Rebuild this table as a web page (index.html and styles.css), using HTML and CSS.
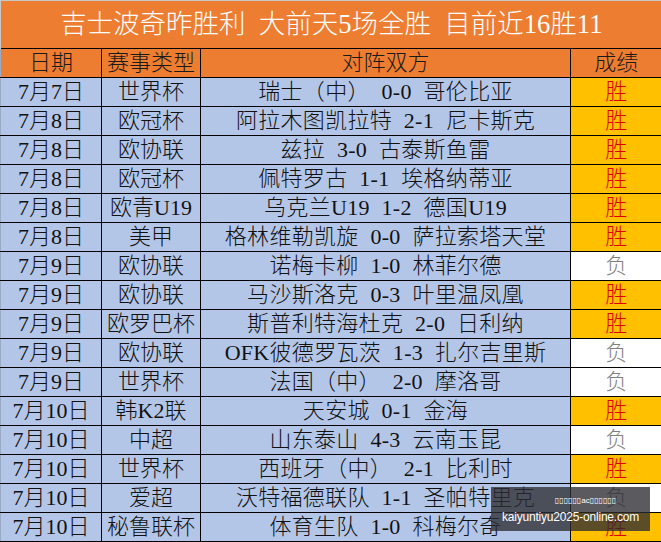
FILE: index.html
```html
<!DOCTYPE html>
<html lang="zh">
<head>
<meta charset="utf-8">
<link rel="stylesheet" href="styles.css">
</head>
<body>
<div class="sheet">
<table class="grid">
<colgroup><col class="c-date"><col class="c-type"><col class="c-match"><col class="c-res"></colgroup>
<tr class="title"><td colspan="4">吉士波奇昨胜利&nbsp; 大前天5场全胜&nbsp; 目前近16胜11</td></tr>
<tr class="head"><td>日期</td><td>赛事类型</td><td>对阵双方</td><td>成绩</td></tr>
<tr><td>7月7日</td><td>世界杯</td><td class="match">瑞士（中） 0-0 哥伦比亚</td><td class="win">胜</td></tr>
<tr><td>7月8日</td><td>欧冠杯</td><td class="match">阿拉木图凯拉特 2-1 尼卡斯克</td><td class="win">胜</td></tr>
<tr><td>7月8日</td><td>欧协联</td><td class="match">兹拉 3-0 古泰斯鱼雷</td><td class="win">胜</td></tr>
<tr><td>7月8日</td><td>欧冠杯</td><td class="match">佩特罗古 1-1 埃格纳蒂亚</td><td class="win">胜</td></tr>
<tr><td>7月8日</td><td>欧青U19</td><td class="match">乌克兰U19 1-2 德国U19</td><td class="win">胜</td></tr>
<tr><td>7月8日</td><td>美甲</td><td class="match">格林维勒凯旋 0-0 萨拉索塔天堂</td><td class="win">胜</td></tr>
<tr><td>7月9日</td><td>欧协联</td><td class="match">诺梅卡柳 1-0 林菲尔德</td><td class="loss">负</td></tr>
<tr><td>7月9日</td><td>欧协联</td><td class="match">马沙斯洛克 0-3 叶里温凤凰</td><td class="win">胜</td></tr>
<tr><td>7月9日</td><td>欧罗巴杯</td><td class="match">斯普利特海杜克 2-0 日利纳</td><td class="win">胜</td></tr>
<tr><td>7月9日</td><td>欧协联</td><td class="match">OFK彼德罗瓦茨 1-3 扎尔吉里斯</td><td class="loss">负</td></tr>
<tr><td>7月9日</td><td>世界杯</td><td class="match">法国（中） 2-0 摩洛哥</td><td class="loss">负</td></tr>
<tr><td>7月10日</td><td>韩K2联</td><td class="match">天安城 0-1 金海</td><td class="win">胜</td></tr>
<tr><td>7月10日</td><td>中超</td><td class="match">山东泰山 4-3 云南玉昆</td><td class="loss">负</td></tr>
<tr><td>7月10日</td><td>世界杯</td><td class="match">西班牙（中） 2-1 比利时</td><td class="win">胜</td></tr>
<tr><td>7月10日</td><td>爱超</td><td class="match">沃特福德联队 1-1 圣帕特里克</td><td class="loss">负</td></tr>
<tr><td>7月10日</td><td>秘鲁联杯</td><td class="match">体育生队 1-0 科梅尔奇</td><td class="win">胜</td></tr>
</table>
<div class="mark">
<div class="mark-top">&#x25AF;&#x25AF;&#x25AF;&#x25AF;&#x25AF;&#x25AF;ac&#x25AF;&#x25AF;&#x25AF;&#x25AF;&#x25AF;&#x25AF;</div>
<div class="mark-url">kaiyuntiyu2025-online.com</div>
</div>
</div>
</body>
</html>
```
FILE: styles.css
```css
html, body {
  margin: 0;
  padding: 0;
  background: #ffffff;
}
.sheet {
  position: relative;
  width: 661px;
  height: 542px;
  overflow: hidden;
}
.grid {
  width: 661px;
  table-layout: fixed;
  border-collapse: collapse;
  font-family: "Liberation Serif", "Noto Sans CJK SC", serif;
  font-size: 22px;
  font-weight: 300;
  color: #111111;
}
.c-date { width: 101px; }
.c-type { width: 99px; }
.c-match { width: 370px; }
.c-res { width: 91px; }
.grid td {
  height: 28px;
  padding: 0;
  text-align: center;
  vertical-align: middle;
  line-height: 28px;
  white-space: nowrap;
  border: 1px solid #000000;
  background: #b4c6e7;
}
.grid td.match {
  word-spacing: 6px;
  letter-spacing: 0.3px;
}
.grid tr.title td {
  height: 47px;
  line-height: 47px;
  background: #ed7d31;
  color: #ffffff;
  font-size: 26.5px;
  border: none;
  border-top: 1px solid #c8c8c8;
  border-left: 1px solid #c8c8c8;
}
.grid tr.head td {
  background: #ed7d31;
  color: #1a1a1a;
}
.grid td.win {
  background: #ffc000;
  color: #e00000;
}
.grid td.loss {
  background: #ffffff;
  color: #7f7f7f;
}
.grid td:first-child { border-left-color: #9aa9c4; }
.grid td:last-child { border-right: none; }
.mark {
  position: absolute;
  left: 491px;
  top: 487px;
  width: 159px;
  height: 44px;
  background: rgba(45, 45, 50, 0.78);
  color: #ffffff;
  font-family: "Liberation Sans", "DejaVu Sans", sans-serif;
  text-align: center;
  white-space: nowrap;
}
.mark-top {
  margin-top: 9px;
  font-size: 8px;
  line-height: 10px;
  padding-left: 30px;
}
.mark-url {
  margin-top: 3px;
  font-size: 12px;
  line-height: 16px;
  letter-spacing: -0.2px;
}
```
